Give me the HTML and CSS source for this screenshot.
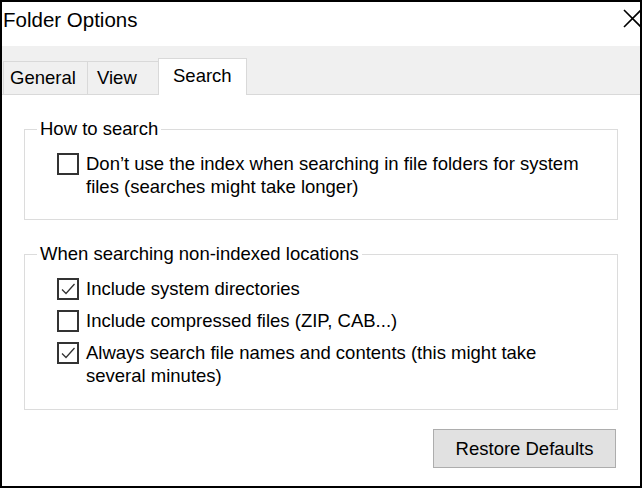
FILE: index.html
```html
<!DOCTYPE html>
<html lang="en">
<head>
    <meta charset="UTF-8">
    <meta name="viewport" content="width=device-width, initial-scale=1.0">
    <title>Folder Options</title>
    <link rel="stylesheet" href="styles.css">
</head>
<body>
    <div class="dialog">
        <div class="titlebar">
            <span class="title">Folder Options</span>
            <span class="close">
                <svg width="20" height="20" viewBox="0 0 20 20">
                    <path d="M2 2 L19 19 M19 2 L2 19" stroke="#000" stroke-width="1.6" fill="none"/>
                </svg>
            </span>
        </div>

        <!-- Tabs -->
        <div class="tabs">
            <div class="tab tab-general">General</div>
            <div class="tab tab-view">View</div>
            <div class="tab tab-search active">Search</div>
        </div>

        <div class="panel">
            <fieldset class="group group-first">
                <legend>How to search</legend>
                <label class="check">
                    <span class="box"></span>
                    <span class="text">Don’t use the index when searching in file folders for system files (searches might take longer)</span>
                </label>
            </fieldset>

            <fieldset class="group group-second">
                <legend>When searching non-indexed locations</legend>
                <label class="check">
                    <span class="box checked">
                        <svg width="18" height="18" viewBox="0 0 18 18"><path d="M3 9.5 L7 13.5 L15.5 4" stroke="#333" stroke-width="1.3" fill="none"/></svg>
                    </span>
                    <span class="text">Include system directories</span>
                </label>
                <label class="check">
                    <span class="box"></span>
                    <span class="text">Include compressed files (ZIP, CAB...)</span>
                </label>
                <label class="check">
                    <span class="box checked">
                        <svg width="18" height="18" viewBox="0 0 18 18"><path d="M3 9.5 L7 13.5 L15.5 4" stroke="#333" stroke-width="1.3" fill="none"/></svg>
                    </span>
                    <span class="text">Always search file names and contents (this might take several minutes)</span>
                </label>
            </fieldset>

            <div class="actions">
                <button type="button">Restore Defaults</button>
            </div>
        </div>
    </div>
</body>
</html>
```

FILE: styles.css
```css
body {
    margin: 0;
    padding: 0;
    font-family: 'Liberation Sans', Arial, sans-serif;
    font-size: 18.5px;
    color: #000;
    background-color: #fff;
}
.dialog {
    width: 642px;
    height: 488px;
    box-sizing: border-box;
    border: 2px solid #000;
    overflow: hidden;
    background-color: #fff;
}
.titlebar {
    height: 44px;
    box-sizing: border-box;
    padding-top: 6px;
    padding-left: 1px;
    display: flex;
    justify-content: space-between;
    align-items: flex-start;
}
.title {
    font-size: 20.5px;
    line-height: 24px;
}
.close {
    margin-top: 0;
    margin-right: -2px;
    height: 20px;
}
.tabs {
    height: 49px;
    box-sizing: border-box;
    background-color: #f0f0f0;
    border-bottom: 1px solid #d9d9d9;
    display: flex;
    align-items: flex-end;
    padding-left: 1px;
}
.tab {
    height: 33px;
    box-sizing: border-box;
    line-height: 32px;
    border: 1px solid #d9d9d9;
    border-bottom: none;
    margin-right: -1px;
}
.tab-general {
    width: 85px;
    padding-left: 6px;
}
.tab-view {
    width: 72px;
    padding-left: 9px;
}
.tab-search {
    width: 89px;
    padding-left: 14px;
}
.tab.active {
    height: 37px;
    line-height: 33px;
    margin-bottom: -1px;
    background-color: #fff;
    position: relative;
}
.panel {
    padding: 23px 22px 0 22px;
}
.group {
    margin: 0;
    border: 1px solid #dcdcdc;
    padding: 12px 20px 21px 12px;
    min-width: 0;
}
.group legend {
    padding: 0 3px;
    line-height: 22px;
}
.group-second {
    margin-top: 23px;
    padding-bottom: 22px;
}
.check {
    display: flex;
    align-items: flex-start;
    gap: 7px;
    padding-left: 20px;
    line-height: 23px;
}
.check + .check {
    margin-top: 9px;
}
.box {
    flex: none;
    width: 22px;
    height: 22px;
    box-sizing: border-box;
    margin-top: 1px;
    border: 2px solid #333;
    display: flex;
    align-items: center;
    justify-content: center;
}
.actions {
    display: flex;
    justify-content: flex-end;
    margin-top: 19px;
    padding-right: 2px;
}
button {
    width: 183px;
    height: 39px;
    padding: 1px 0 0;
    background-color: #e1e1e1;
    border: 1px solid #adadad;
    font-family: 'Liberation Sans', Arial, sans-serif;
    font-size: 18.5px;
    color: #000;
}
```
